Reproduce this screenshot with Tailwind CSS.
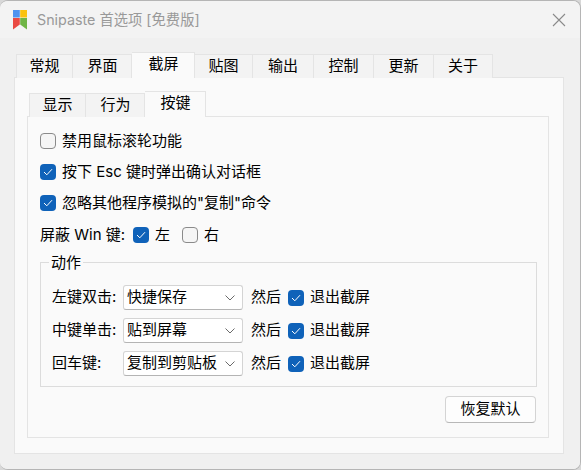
<!DOCTYPE html>
<html><head><meta charset="utf-8"><script src="https://cdn.jsdelivr.net/npm/@tailwindcss/browser@4"></script></head>
<body class="m-0 bg-[#d8d8d8]">
<div class="w-[581px] h-[470px] overflow-hidden rounded-t-[8px] rounded-b-[8px] bg-[#f0f0f0] border-t border-r border-b border-[#b5b5b5] box-border flex flex-col text-[15px] text-[#000000]" style="font-family:'Inter','Noto Sans CJK SC',sans-serif">
  <div class="h-[37px] shrink-0 bg-[#f3f3f3] flex items-center pl-[13px] pr-[14px]">
    <svg width="14" height="20" viewBox="0 0 14 20" class="shrink-0"><rect x="0" y="0" width="6.8" height="7.5" fill="#4f93f0"/><rect x="7.2" y="0" width="6.8" height="7.5" fill="#fbc20e"/><path d="M0 8H6.8V14.5L0 19.5Z" fill="#ea4a43"/><path d="M7.2 8H14V19.5L7.2 14.5Z" fill="#6fb545"/></svg>
    <span class="ml-[10px] text-[#999999] text-[14.3px] mt-[1px]">Snipaste 首选项 [免费版]</span>
    <svg width="14" height="14" viewBox="0 0 14 14" class="ml-auto mt-[1px]"><path d="M1 1L13 13M13 1L1 13" stroke="#8a8a8a" stroke-width="1.1" fill="none"/></svg>
  </div>
  <div class="flex-1 min-h-0 bg-[#f0f0f0] pl-[14px] pr-[16px] pt-[15px] pb-[15px] flex flex-col">
    <div class="h-[25px] pl-[2px] flex items-end relative z-10 -mb-[1px] shrink-0">
      <div class="w-[57px] h-[24px] pb-[1px] bg-[#f3f3f3] border border-b-0 border-[#e4e4e4] flex items-center justify-center">常规</div>
      <div class="w-[59px] h-[24px] pb-[1px] pl-[1px] bg-[#f3f3f3] border border-b-0 border-l-0 border-[#e4e4e4] flex items-center justify-center">界面</div>
      <div class="w-[63px] h-[26px] pb-[2px] pl-[1px] bg-[#fafafa] border border-b-0 border-l-0 border-[#e4e4e4] flex items-center justify-center">截屏</div>
      <div class="w-[58px] h-[24px] pb-[1px] bg-[#f3f3f3] border border-b-0 border-l-0 border-[#e4e4e4] flex items-center justify-center">贴图</div>
      <div class="w-[61px] h-[24px] pb-[1px] bg-[#f3f3f3] border border-b-0 border-l-0 border-[#e4e4e4] flex items-center justify-center">输出</div>
      <div class="w-[60px] h-[24px] pb-[1px] bg-[#f3f3f3] border border-b-0 border-l-0 border-[#e4e4e4] flex items-center justify-center">控制</div>
      <div class="w-[60px] h-[24px] pb-[1px] bg-[#f3f3f3] border border-b-0 border-l-0 border-[#e4e4e4] flex items-center justify-center">更新</div>
      <div class="w-[59px] h-[24px] pb-[1px] bg-[#f3f3f3] border border-b-0 border-l-0 border-[#e4e4e4] flex items-center justify-center">关于</div>
    </div>
    <div class="flex-1 min-h-0 bg-[#fafafa] border border-[#e4e4e4] pl-[12px] pr-[14px] pt-[13px] pb-[15px] flex flex-col">
      <div class="h-[26px] pl-[2px] flex items-end relative z-10 -mb-[1px] shrink-0">
        <div class="w-[57px] h-[24px] pb-[1px] bg-[#f3f3f3] border border-b-0 border-[#e4e4e4] flex items-center justify-center">显示</div>
        <div class="w-[59px] h-[24px] pb-[1px] pl-[1px] bg-[#f3f3f3] border border-b-0 border-l-0 border-[#e4e4e4] flex items-center justify-center">行为</div>
        <div class="w-[61px] h-[26px] pb-[2px] pl-[1px] bg-[#fafafa] border border-b-0 border-l-0 border-[#e4e4e4] flex items-center justify-center">按键</div>
      </div>
      <div class="flex-1 min-h-0 bg-[#fafafa] border border-[#e4e4e4] pl-[12px] pr-[11px] pt-[14px] flex flex-col">
        <label class="h-[20px] flex items-center gap-[6px]">
          <span class="w-[16px] h-[16px] rounded-[4px] border border-[#8a8a8a] bg-[#f5f5f5] shrink-0"></span>禁用鼠标滚轮功能
        </label>
        <label class="h-[20px] mt-[11px] flex items-center gap-[6px]">
          <span class="w-[16px] h-[16px] rounded-[4px] bg-[#0f62b9] shrink-0 flex items-center justify-center"><svg width="10" height="8" viewBox="0 0 10 8"><path d="M1 4L3.8 6.8L9 1.2" stroke="#fff" stroke-width="1" fill="none"/></svg></span>按下 Esc 键时弹出确认对话框
        </label>
        <label class="h-[20px] mt-[11px] flex items-center gap-[6px]">
          <span class="w-[16px] h-[16px] rounded-[4px] bg-[#0f62b9] shrink-0 flex items-center justify-center"><svg width="10" height="8" viewBox="0 0 10 8"><path d="M1 4L3.8 6.8L9 1.2" stroke="#fff" stroke-width="1" fill="none"/></svg></span>忽略其他程序模拟的"复制"命令
        </label>
        <div class="h-[20px] mt-[12px] flex items-center">
          <span class="w-[93px] shrink-0 whitespace-nowrap">屏蔽 Win 键:</span>
          <span class="w-[16px] h-[16px] rounded-[4px] bg-[#0f62b9] shrink-0 flex items-center justify-center"><svg width="10" height="8" viewBox="0 0 10 8"><path d="M1 4L3.8 6.8L9 1.2" stroke="#fff" stroke-width="1" fill="none"/></svg></span>
          <span class="ml-[6px]">左</span>
          <span class="w-[16px] h-[16px] ml-[12px] rounded-[4px] border border-[#8a8a8a] bg-[#f5f5f5] shrink-0"></span>
          <span class="ml-[6px]">右</span>
        </div>
        <div class="relative mt-[17px] h-[125px] border border-[#dcdcdc] pl-[11px] pt-[22px] flex flex-col gap-[8px] shrink-0">
          <span class="absolute left-[8px] -top-[10px] px-[2px] bg-[#fafafa] leading-[20px]">动作</span>
          <div class="h-[25px] flex items-center">
            <span class="w-[71px]">左键双击:</span>
            <div class="w-[120px] h-[25px] rounded-[3px] bg-white border border-[#d4d4d4] border-b-[#b4b4b4] flex items-center pl-[3px] pr-[7px] justify-between">快捷保存<svg width="10" height="6" viewBox="0 0 10 6"><path d="M0.5 0.5L5 5L9.5 0.5" stroke="#6a6a6a" fill="none"/></svg></div>
            <span class="ml-[8px]">然后</span>
            <span class="w-[16px] h-[16px] ml-[7px] rounded-[4px] bg-[#0f62b9] flex items-center justify-center"><svg width="10" height="8" viewBox="0 0 10 8"><path d="M1 4L3.8 6.8L9 1.2" stroke="#fff" stroke-width="1" fill="none"/></svg></span>
            <span class="ml-[6px]">退出截屏</span>
          </div>
          <div class="h-[25px] flex items-center">
            <span class="w-[71px]">中键单击:</span>
            <div class="w-[120px] h-[25px] rounded-[3px] bg-white border border-[#d4d4d4] border-b-[#b4b4b4] flex items-center pl-[3px] pr-[7px] justify-between">贴到屏幕<svg width="10" height="6" viewBox="0 0 10 6"><path d="M0.5 0.5L5 5L9.5 0.5" stroke="#6a6a6a" fill="none"/></svg></div>
            <span class="ml-[8px]">然后</span>
            <span class="w-[16px] h-[16px] ml-[7px] rounded-[4px] bg-[#0f62b9] flex items-center justify-center"><svg width="10" height="8" viewBox="0 0 10 8"><path d="M1 4L3.8 6.8L9 1.2" stroke="#fff" stroke-width="1" fill="none"/></svg></span>
            <span class="ml-[6px]">退出截屏</span>
          </div>
          <div class="h-[25px] flex items-center">
            <span class="w-[71px]">回车键:</span>
            <div class="w-[120px] h-[25px] rounded-[3px] bg-white border border-[#d4d4d4] border-b-[#b4b4b4] flex items-center pl-[3px] pr-[7px] justify-between">复制到剪贴板<svg width="10" height="6" viewBox="0 0 10 6"><path d="M0.5 0.5L5 5L9.5 0.5" stroke="#6a6a6a" fill="none"/></svg></div>
            <span class="ml-[8px]">然后</span>
            <span class="w-[16px] h-[16px] ml-[7px] rounded-[4px] bg-[#0f62b9] flex items-center justify-center"><svg width="10" height="8" viewBox="0 0 10 8"><path d="M1 4L3.8 6.8L9 1.2" stroke="#fff" stroke-width="1" fill="none"/></svg></span>
            <span class="ml-[6px]">退出截屏</span>
          </div>
        </div>
        <div class="flex justify-end mt-[9px] pr-[1px]">
          <button class="w-[91px] h-[27px] rounded-[4px] bg-[#fdfdfd] border border-[#d4d4d4] border-b-[#b8b8b8] flex items-center justify-center">恢复默认</button>
        </div>
      </div>
    </div>
  </div>
</div>
</body></html>
